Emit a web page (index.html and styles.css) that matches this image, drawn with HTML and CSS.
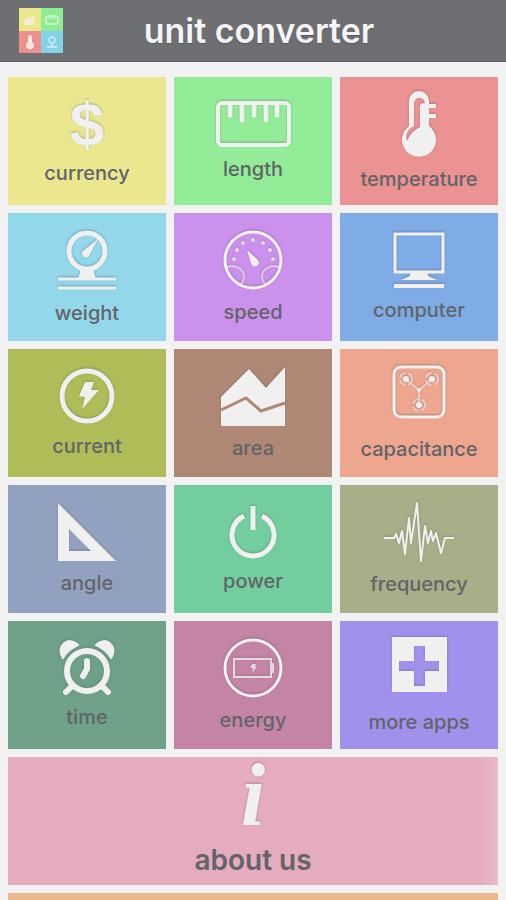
FILE: index.html
```html
<!DOCTYPE html>
<html lang="en">
<head>
    <meta charset="UTF-8">
    <meta name="viewport" content="width=device-width, initial-scale=1.0">
    <title>Unit Converter</title>
    <link rel="stylesheet" href="styles.css">
</head>
<body>
    <header class="header">
        <svg class="logo" width="44" height="45" viewBox="0 0 44 45" aria-hidden="true">
            <rect width="22" height="23" fill="#ebe78b"/>
            <rect x="22" width="22" height="23" fill="#8eec92"/>
            <rect y="23" width="22" height="22" fill="#ec8f8f"/>
            <rect x="22" y="23" width="22" height="22" fill="#82d3e8"/>
            <path d="M5 17v-5l5-4 3 2 3-2v9z" fill="#f1efd0"/>
            <rect x="27" y="8" width="12" height="8" rx="2" fill="none" stroke="#d6f5d6" stroke-width="1.5"/>
            <path d="M30 8v3M33 8v3M36 8v3" stroke="#d6f5d6"/>
            <path d="M9 29a2 2 0 0 1 4 0v5a4 4 0 1 1-4 0z" fill="#f5e4e4"/>
            <circle cx="33" cy="32" r="3" fill="none" stroke="#c9e9f2" stroke-width="1.5"/>
            <path d="M33 35v3M28 39h10" stroke="#c9e9f2" stroke-width="2"/>
        </svg>
        <h1>unit converter</h1>
    </header>

    <main class="tiles">
        <a class="tile currency" href="#currency">
            <svg width="36" height="54" viewBox="0 0 36 54" aria-hidden="true">
                <text x="18" y="48" text-anchor="middle" class="sign dollar">$</text>
            </svg>
            <span>currency</span>
        </a>
        <a class="tile length" href="#length">
            <svg width="75" height="46" viewBox="0 0 75 46" aria-hidden="true">
                <rect x="2" y="2" width="71" height="42" rx="4" class="line w4"/>
                <path d="M14 3v11M26 3v16M38 3v11M50 3v16M61 3v11" class="line w5 round"/>
            </svg>
            <span>length</span>
        </a>
        <a class="tile temperature" href="#temperature">
            <svg width="36" height="66" viewBox="0 0 36 66" aria-hidden="true">
                <path fill-rule="evenodd" d="M8 10a10 10 0 0 1 20 0v25a17 17 0 1 1-20 0zM13 12v23C7 38 4 43 6 50C9 43 13 39 19 36V15c0-2 2-3 5-3c-1-7-10-7-11 0z"/>
                <path d="M26 15h9M26 25h9" class="line w4"/>
            </svg>
            <span>temperature</span>
        </a>
        <a class="tile weight" href="#weight">
            <svg width="60" height="61" viewBox="0 0 60 61" aria-hidden="true">
                <circle cx="30" cy="21" r="18" class="line w5"/>
                <path d="M41 9L33 24a4 4 0 1 1-6-4z"/>
                <path d="M23 39h14v4l2 6H21l2-6z"/>
                <path d="M1 49h58M1 58h58" class="line w3"/>
            </svg>
            <span>weight</span>
        </a>
        <a class="tile speed" href="#speed">
            <svg width="60" height="60" viewBox="0 0 60 60" aria-hidden="true">
                <circle cx="30" cy="30" r="28" class="line w3"/>
                <g class="dots">
                    <circle cx="11" cy="29" r="2"/>
                    <circle cx="14" cy="20" r="2"/>
                    <circle cx="20" cy="13" r="2"/>
                    <circle cx="30" cy="10" r="2"/>
                    <circle cx="40" cy="13" r="2"/>
                    <circle cx="47" cy="20" r="2"/>
                    <circle cx="50" cy="29" r="2"/>
                </g>
                <path d="M4 37c9-3 17 2 17 10c0 4-2 6-4 8M56 37c-9-3-17 2-17 10c0 4 2 6 4 8" class="line w2 faint"/>
                <path d="M24 20l10 9a4 4 0 1 1-6 4z"/>
            </svg>
            <span>speed</span>
        </a>
        <a class="tile computer" href="#computer">
            <svg width="52" height="56" viewBox="0 0 52 56" aria-hidden="true">
                <rect x="2" y="2" width="48" height="38" class="line w3"/>
                <path d="M17 41h18v3l9 4H8l9-4zM1 52h50v4H1z"/>
            </svg>
            <span>computer</span>
        </a>
        <a class="tile current" href="#current">
            <svg width="56" height="56" viewBox="0 0 56 56" aria-hidden="true">
                <circle cx="28" cy="28" r="25" class="line w5"/>
                <path d="M26 14h9l-3 8h8L23 41l3-12-6-1z"/>
            </svg>
            <span>current</span>
        </a>
        <a class="tile area" href="#area">
            <svg width="64" height="59" viewBox="0 0 64 59" aria-hidden="true">
                <path d="M0 30L28 2l17 19L64 0v59H0z"/>
                <path d="M0 43L25 31l15 13 24-8" class="cut"/>
            </svg>
            <span>area</span>
        </a>
        <a class="tile spaced capacitance" href="#capacitance">
            <svg width="54" height="54" viewBox="0 0 54 54" aria-hidden="true">
                <rect x="2" y="2" width="50" height="50" rx="7" class="line w3"/>
                <g class="line w2 faint">
                    <circle cx="14" cy="14" r="6" stroke-dasharray="7 3"/>
                    <circle cx="40" cy="14" r="6" stroke-dasharray="7 3"/>
                    <circle cx="27" cy="40" r="6" stroke-dasharray="7 3"/>
                    <path d="M14 14l13 11 13-11M27 25v15"/>
                </g>
                <circle cx="14" cy="14" r="3"/>
                <circle cx="40" cy="14" r="3"/>
                <circle cx="27" cy="40" r="3"/>
                <circle cx="27" cy="25" r="2"/>
            </svg>
            <span>capacitance</span>
        </a>
        <a class="tile angle" href="#angle">
            <svg width="58" height="58" viewBox="0 0 58 58" aria-hidden="true">
                <path fill-rule="evenodd" d="M0 0l58 58H0zM11 26v22h22z"/>
            </svg>
            <span>angle</span>
        </a>
        <a class="tile power" href="#power">
            <svg width="48" height="53" viewBox="0 0 48 53" aria-hidden="true">
                <path d="M24 0v24M15 10A21 21 0 1 0 33 10" class="line w5"/>
            </svg>
            <span>power</span>
        </a>
        <a class="tile frequency" href="#frequency">
            <svg width="70" height="60" viewBox="0 0 70 60" aria-hidden="true">
                <path d="M0 36h10l2-4 3 9 3-12 3 23 4-36 2 25 6-40 4 58 4-35 3 17 3-12 2 10 3-8 5 20 4-15h9" class="line w2 join"/>
            </svg>
            <span>frequency</span>
        </a>
        <a class="tile time" href="#time">
            <svg width="54" height="54" viewBox="0 0 54 54" aria-hidden="true">
                <circle cx="27" cy="30" r="20" class="line w6"/>
                <path d="M3 17C-5 5 9-6 18 4C11 7 6 11 3 17zM51 17C59 5 45-6 36 4C43 7 48 11 51 17z" class="bells"/>
                <path d="M11 46l-5 5M43 46l5 5M27 20v8l-4 7" class="line w6 round"/>
            </svg>
            <span>time</span>
        </a>
        <a class="tile energy" href="#energy">
            <svg width="60" height="60" viewBox="0 0 60 60" aria-hidden="true">
                <circle cx="30" cy="30" r="28" class="line w3"/>
                <g class="dots">
                    <rect x="11" y="21" width="37" height="18" class="line w2"/>
                    <path d="M49 25h2v10h-2zM29 26h4l-1 3h2l-5 6 1-5h-3z"/>
                </g>
            </svg>
            <span>energy</span>
        </a>
        <a class="tile spaced more" href="#more">
            <svg width="55" height="55" viewBox="0 0 55 55" aria-hidden="true">
                <path fill-rule="evenodd" d="M0 0h55v55H0zM22 9v15H7v10h15v15h11V34h14V24H33V9z"/>
            </svg>
            <span>more apps</span>
        </a>
        <a class="tile wide spaced about" href="#about">
            <svg width="34" height="59" viewBox="0 0 34 59" aria-hidden="true">
                <text x="17" y="58" text-anchor="middle" class="sign info">i</text>
            </svg>
            <span>about us</span>
        </a>
        <div class="tile wide next"></div>
    </main>
</body>
</html>
```
FILE: styles.css
```css
* {
    box-sizing: border-box;
}

body {
    margin: 0;
    height: 100vh;
    display: flex;
    flex-direction: column;
    background: #f2f2f2;
    font-family: Inter, "Open Sans", sans-serif;
}

.header {
    flex: none;
    display: grid;
    grid-template-columns: 1fr auto 1fr;
    align-items: center;
    height: 62px;
    padding: 0 7px 0 19px;
    background: #6e6f73;
    border-bottom: 1px solid #5f6064;
}

.logo {
    display: block;
}

h1 {
    margin: 0;
    font-size: 34px;
    line-height: 40px;
    font-weight: 600;
    color: #f4f4f4;
    text-shadow: 0 1px 1px #55565a;
}

.tiles {
    flex: 1;
    min-height: 0;
    overflow-y: auto;
    scrollbar-width: none;
    display: grid;
    grid-template-columns: repeat(3, 1fr);
    grid-auto-rows: 128px;
    gap: 8px;
    padding: 15px 8px;
}

.tile {
    display: flex;
    flex-direction: column;
    align-items: center;
    justify-content: center;
    gap: 10px;
    color: #626468;
    font-size: 20px;
    line-height: 24px;
    font-weight: 500;
    text-decoration: none;
}

.tile svg {
    display: block;
    overflow: visible;
    fill: #f0f0f0;
    filter: drop-shadow(0 -1px 1px rgba(90, 90, 90, 0.4));
}

.spaced {
    gap: 18px;
}

.wide {
    grid-column: 1 / -1;
}

/* icon strokes */
.line {
    fill: none;
    stroke: #f0f0f0;
}

.w2 { stroke-width: 2; }
.w3 { stroke-width: 3; }
.w4 { stroke-width: 4; }
.w5 { stroke-width: 5; }
.w6 { stroke-width: 6; }

.round {
    stroke-linecap: round;
}

.join {
    stroke-linejoin: round;
}

.faint {
    opacity: 0.6;
}

.dots {
    opacity: 0.8;
}

.bells {
    stroke: #f0f0f0;
    stroke-width: 2;
    stroke-linejoin: round;
}

.cut {
    fill: none;
    stroke: #ae8875;
    stroke-width: 3;
}

.sign {
    font-weight: 700;
}

.dollar {
    font-family: "Liberation Sans", sans-serif;
    font-size: 62px;
}

.info {
    font-family: "Liberation Serif", serif;
    font-size: 88px;
    font-style: italic;
}

/* tile colours */
.currency { background: #ebe78f; }
.length { background: #92ec98; }
.temperature { background: #eb9292; }
.weight { background: #92d7ea; }
.speed { background: #cb91ec; }
.computer { background: #7fabe6; }
.current { background: #b0bc58; }
.area { background: #ae8875; }
.capacitance { background: #eea68f; }
.angle { background: #92a1bf; }
.power { background: #72ce9e; }
.frequency { background: #a8ae87; }
.time { background: #6fa189; }
.energy { background: #c384a5; }
.more { background: #a191ec; }

.about {
    background: linear-gradient(to right, #e5abbf 96%, #ecbacd);
    font-size: 28px;
    line-height: 32px;
    font-weight: 600;
}

.next {
    background: #e9b88f;
}
```
